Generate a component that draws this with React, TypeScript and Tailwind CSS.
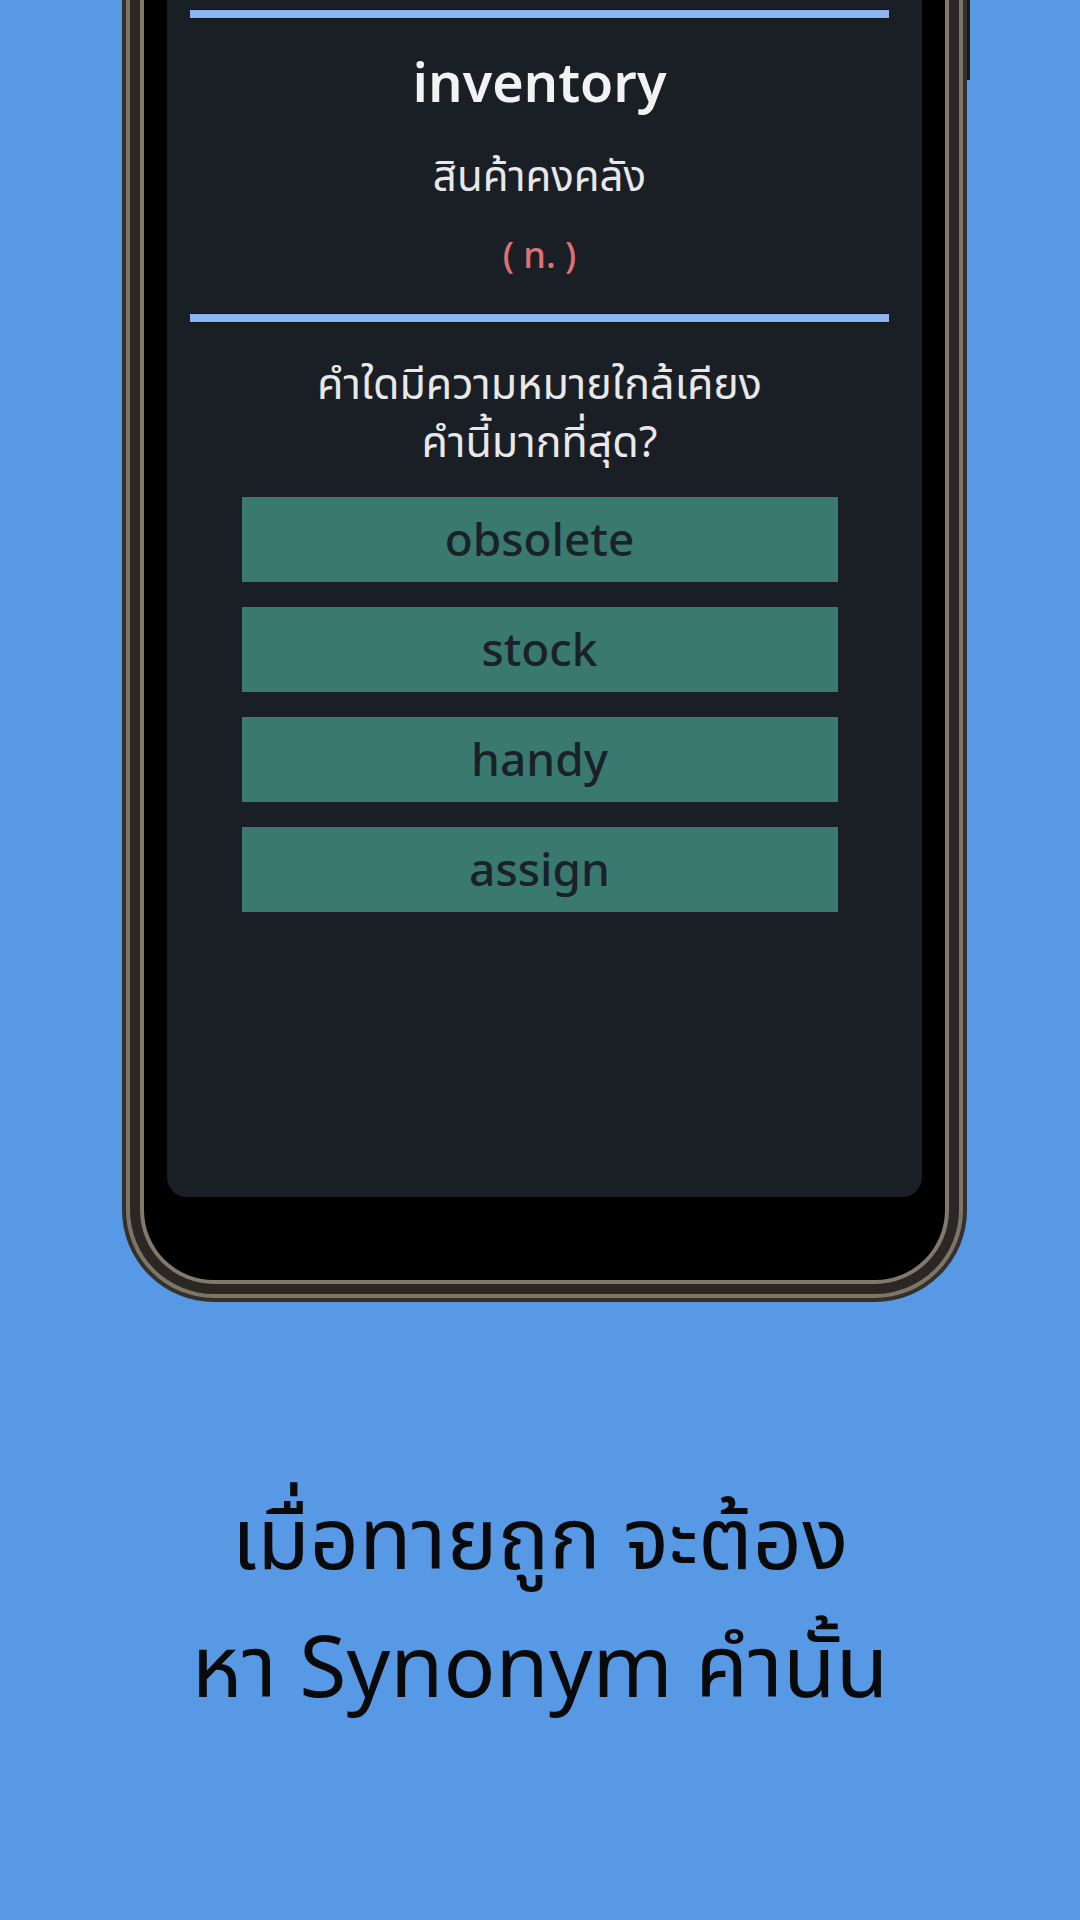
import React from "react";

const choices = ["obsolete", "stock", "handy", "assign"];

const appFont = { fontFamily: '"Noto Sans Thai", "Noto Sans", "Open Sans", sans-serif' };

const Divider = () => (
  <div className="h-[10px] w-full bg-[#8db6ee] border-y border-[#0e1318]" />
);

const QuizScreen = () => {
  return (
    <div
      className="w-[755px] h-[1197px] rounded-b-[20px] bg-[#1a1f26] pt-[9px]"
      style={appFont}
    >
      <div className="ml-[23px] w-[699px] flex flex-col items-center">
        <Divider />
        <div className="mt-[32px] text-[54px] leading-[70px] font-semibold text-[#f2f2f2]">
          inventory
        </div>
        <div className="mt-[29px] text-[42px] leading-[56px] text-[#e8e8e8]">
          สินค้าคงคลัง
        </div>
        <div className="mt-[26px] text-[36px] leading-[50px] font-medium text-[#e27070]">
          ( n. )
        </div>
        <div className="mt-[31px] w-full">
          <Divider />
        </div>
        <div className="mt-[34px] text-[43px] leading-[58px] text-center text-[#e8e8e8]">
          คำใดมีความหมายใกล้เคียง
          <br />
          คำนี้มากที่สุด?
        </div>
        <div className="mt-[24px] flex flex-col gap-[25px]">
          {choices.map((c) => (
            <div
              key={c}
              className="w-[596px] h-[85px] pt-[6px] bg-[#3a7970] flex items-center justify-center text-[46px] font-medium text-[#1a2128]"
            >
              {c}
            </div>
          ))}
        </div>
      </div>
    </div>
  );
};

export default function App() {
  return (
    <div className="w-[1080px] h-[1920px] bg-[#5899e6] flex flex-col items-center overflow-hidden">
      <div className="relative ml-[9px] w-[845px] h-[1302px] rounded-b-[92px] bg-[#34302b] px-[4px] pb-[4px]">
        <div className="absolute -right-[3px] top-0 w-[3px] h-[80px] bg-[#1d1b18]" />
        <div className="h-full rounded-b-[88px] bg-[#7d7568] px-[4px] pb-[4px]">
          <div className="h-full rounded-b-[84px] bg-[#2b2824] px-[10px] pb-[10px]">
            <div className="h-full rounded-b-[74px] bg-[#81796c] px-[4px] pb-[4px]">
              <div className="h-full rounded-b-[70px] bg-black pl-[23px] pr-[23px]">
                <QuizScreen />
              </div>
            </div>
          </div>
        </div>
      </div>
      <div
        className="mt-[177px] text-center text-[86px] leading-[128px] text-[#0a0a0a]"
        style={{ fontFamily: '"Noto Sans Thai", "Noto Sans", sans-serif' }}
      >
        เมื่อทายถูก จะต้อง
        <br />
        หา Synonym คำนั้น
      </div>
    </div>
  );
}
